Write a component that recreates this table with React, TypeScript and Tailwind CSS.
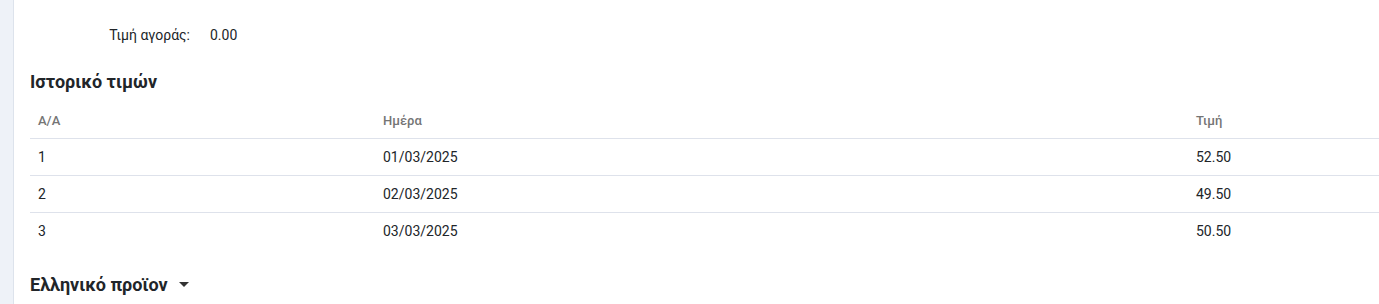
import { Fragment } from "react";

const rows = [
  { n: "1", date: "01/03/2025", price: "52.50" },
  { n: "2", date: "02/03/2025", price: "49.50" },
  { n: "3", date: "03/03/2025", price: "50.50" },
];

export default function App() {
  return (
    <div
      className="flex h-[304px] w-full bg-white text-[#212529]"
      style={{ fontFamily: "Roboto, 'Liberation Sans', sans-serif" }}
    >
      <div className="w-[14px] shrink-0 border-r border-[#dde3ec] bg-[#eef2f8]" />
      <div className="flex-1 pl-[16px]">
        <div className="flex items-center pt-[25px] text-[14px] leading-[20px]">
          <span className="w-[180px] pr-[20px] text-right">Τιμή αγοράς:</span>
          <span>0.00</span>
        </div>

        <h2 className="mt-[25px] text-[18px] font-bold leading-[24px] text-[#212529]">
          Ιστορικό τιμών
        </h2>

        <div className="mt-[11px] grid grid-cols-[345px_813px_1fr] text-[14px]">
          <div className="border-b border-[#dee2eb] px-[8px] pb-[9px] pt-[8px] text-[13px] font-medium leading-[16px] text-[#757575]">
            A/A
          </div>
          <div className="border-b border-[#dee2eb] px-[8px] pb-[9px] pt-[8px] text-[13px] font-medium leading-[16px] text-[#757575]">
            Ημέρα
          </div>
          <div className="border-b border-[#dee2eb] px-[8px] pb-[9px] pt-[8px] text-[13px] font-medium leading-[16px] text-[#757575]">
            Τιμή
          </div>
          {rows.map((r, i) => {
            const line = i < rows.length - 1 ? "border-b border-[#dee2eb]" : "";
            return (
              <Fragment key={r.n}>
                <div className={`px-[8px] py-[9px] leading-[18px] ${line}`}>{r.n}</div>
                <div className={`px-[8px] py-[9px] leading-[18px] ${line}`}>{r.date}</div>
                <div className={`px-[8px] py-[9px] leading-[18px] ${line}`}>{r.price}</div>
              </Fragment>
            );
          })}
        </div>

        <div className="mt-[24px] flex items-center gap-[11px]">
          <span className="text-[18px] font-bold leading-[24px]">Ελληνικό προϊον</span>
          <svg width="10" height="6" viewBox="0 0 10 6">
            <path d="M0 0 L10 0 L5 5 Z" fill="#333" />
          </svg>
        </div>
      </div>
    </div>
  );
}
